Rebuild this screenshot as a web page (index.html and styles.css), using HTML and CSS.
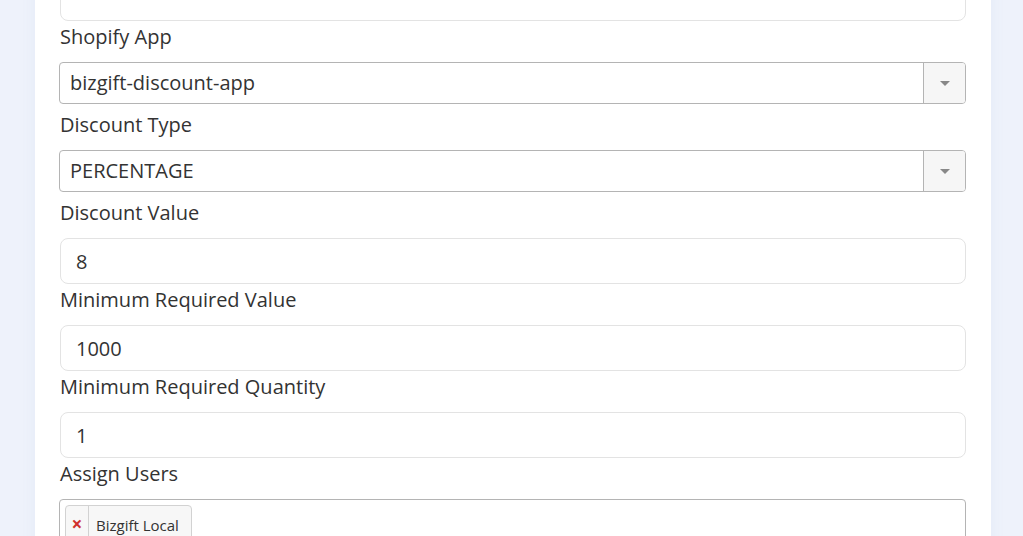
FILE: index.html
```html
<!DOCTYPE html>
<html lang="en">
<head>
    <meta charset="UTF-8">
    <meta name="viewport" content="width=device-width, initial-scale=1.0">
    <title>Discount</title>
    <link rel="stylesheet" href="styles.css">
</head>
<body>
    <div class="container">
        <div class="form-group">
            <input type="text" class="field first" value="">
        </div>
        <div class="form-group">
            <label>Shopify App</label>
            <div class="select">
                <span class="select-value">bizgift-discount-app</span>
                <span class="select-arrow"><b></b></span>
            </div>
        </div>
        <div class="form-group">
            <label>Discount Type</label>
            <div class="select">
                <span class="select-value">PERCENTAGE</span>
                <span class="select-arrow"><b></b></span>
            </div>
        </div>
        <div class="form-group">
            <label>Discount Value</label>
            <input type="text" class="field" value="8">
        </div>
        <div class="form-group">
            <label>Minimum Required Value</label>
            <input type="text" class="field" value="1000">
        </div>
        <div class="form-group">
            <label>Minimum Required Quantity</label>
            <input type="text" class="field" value="1">
        </div>
        <div class="form-group">
            <label>Assign Users</label>
            <div class="multi">
                <span class="tag"><span class="tag-remove">&times;</span><span class="tag-text">Bizgift Local</span></span>
            </div>
        </div>
    </div>
</body>
</html>
```

FILE: styles.css
```css
body {
    font-family: "Open Sans", Arial, sans-serif;
    background-color: #eef2fb;
    margin: 0;
    padding: 0;
    overflow: hidden;
}
.container {
    margin: -26px 32px 0 35px;
    padding: 0 25px 40px;
    background-color: #fff;
    box-shadow: 0 0 14px rgba(120, 140, 190, 0.08);
}
.form-group {
    margin: 0;
}
label {
    display: block;
    margin: 2px 0 11px;
    line-height: 28px;
    font-size: 20px;
    color: #333;
}
.field {
    display: block;
    width: 100%;
    height: 46px;
    padding: 0 15px;
    box-sizing: border-box;
    border: 1px solid #e3e3e3;
    border-radius: 8px;
    font-family: inherit;
    font-size: 20px;
    color: #333;
    outline: none;
}
.first {
    height: 47px;
}
.select {
    display: flex;
    height: 42px;
    margin: 0 0 7px -1px;
    border: 1px solid #b4b4b4;
    border-radius: 4px;
    box-sizing: border-box;
    overflow: hidden;
}
.select-value {
    flex: 1;
    padding: 0 10px;
    line-height: 40px;
    font-size: 20px;
    color: #333;
}
.select-arrow {
    width: 41px;
    border-left: 1px solid #b4b4b4;
    background-color: #f6f6f6;
    display: flex;
    align-items: center;
    justify-content: center;
}
.select-arrow b {
    border-top: 5px solid #888;
    border-left: 5px solid transparent;
    border-right: 5px solid transparent;
}
.multi {
    height: 60px;
    margin-left: -1px;
    border: 1px solid #b4b4b4;
    border-radius: 4px;
    padding: 5px;
}
.tag {
    display: inline-flex;
    height: 34px;
    border: 1px solid #d2d2d2;
    border-radius: 4px;
    background-color: #f7f7f7;
    font-size: 15px;
    color: #333;
}
.tag-remove {
    width: 22px;
    border-right: 1px solid #d2d2d2;
    color: #d0312d;
    font-size: 19px;
    font-weight: bold;
    text-align: center;
    line-height: 36px;
}
.tag-text {
    padding: 0 12px 0 7px;
    line-height: 38px;
}
```
